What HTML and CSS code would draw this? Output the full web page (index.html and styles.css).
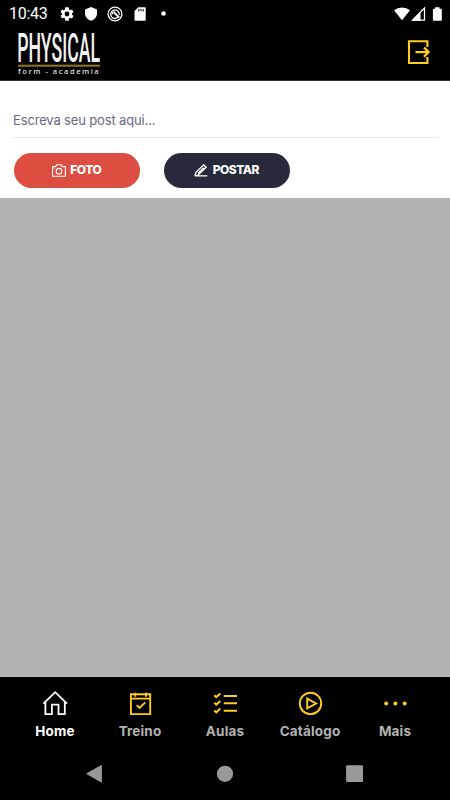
FILE: index.html
```html
<!DOCTYPE html>
<html lang="pt-BR">
<head>
  <meta charset="UTF-8">
  <meta name="viewport" content="width=device-width, initial-scale=1.0">
  <title>Physical Form Academia</title>
  <link rel="stylesheet" href="styles.css">
</head>
<body>
  <!-- barra de status -->
  <div class="status-bar">
    <span class="clock">10:43</span>
    <div class="status-icons">
      <svg width="16" height="16" viewBox="0 0 24 24"><path fill="#fff" fill-rule="evenodd" d="M19.4 13a7.500 7.500 0 0 0 0-2l2.400-1.800-2.300-4-2.800 1.100a7 7 0 0 0-1.700-1L14.600 2H9.400L9 5.300a7 7 0 0 0-1.700 1L4.500 5.200l-2.300 4L4.600 11a7.500 7.500 0 0 0 0 2l-2.400 1.800 2.300 4 2.800-1.100a7 7 0 0 0 1.700 1l.4 3.300h5.200l.4-3.300a7 7 0 0 0 1.700-1l2.800 1.100 2.300-4zM12 15.600a3.600 3.600 0 1 1 0-7.200 3.600 3.600 0 0 1 0 7.200z"/></svg>
      <svg width="16" height="16" viewBox="0 0 16 16"><path fill="#fff" d="M8 1l6 2.400v4.100c0 3.300-2.500 6.200-6 7.300-3.500-1.100-6-4-6-7.300V3.400z"/></svg>
      <svg width="16" height="16" viewBox="0 0 16 16" fill="none" stroke="#fff"><circle cx="8" cy="8" r="6.900" stroke-width="1.300"/><path d="M11.700 10.300a4.300 4.300 0 1 1 .5-1.500" stroke-width="1.300"/><path d="M7 6.800l5.200 4.600" stroke-width="1.900"/><path d="M5.300 8.400a1.900 1.900 0 0 1 3-2" stroke-width="1.300"/></svg>
      <svg width="16" height="16" viewBox="0 0 16 16"><path fill="#fff" d="M6.300 1.200h6.400c.6 0 1 .4 1 1v11.600c0 .6-.4 1-1 1H3.500c-.6 0-1-.4-1-1V5z"/><path stroke="#000" d="M6.800 3v2.400M9 3v2.400M11.200 3v2.400"/></svg>
      <svg width="16" height="16" viewBox="0 0 16 16"><circle cx="7.500" cy="7.500" r="2.300" fill="#fff"/></svg>
    </div>
    <svg class="signal" width="50" height="16" viewBox="0 0 50 16">
      <path fill="#fff" d="M0 4.300a12.500 12.500 0 0 1 16 0L8 14.300z"/>
      <path fill="none" stroke="#fff" stroke-width="1.200" d="M18.600 14.100L30.500 2v12.100z"/>
      <path fill="#fff" d="M17.500 14.700L26.500 5.500v9.200z"/>
      <path fill="#fff" d="M41 1.200h4.500v1.500h1.600c.4 0 .7.300.7.700v10.500c0 .4-.3.800-.8.800h-7.300c-.5 0-.8-.4-.8-.8V3.400c0-.4.300-.7.700-.7H41z"/>
    </svg>
  </div>

  <!-- topo com logo e sair -->
  <header class="header">
    <svg class="logo" width="90" height="50" viewBox="0 0 90 50">
      <text class="logo-name" transform="translate(1.200 33.300) scale(.46 1)" textLength="180" lengthAdjust="spacingAndGlyphs">PHYSICAL</text>
      <rect x="2" y="35.700" width="82" height="2" fill="#967714"/>
      <text class="logo-sub" x="2" y="45">form - academia</text>
    </svg>
    <svg width="24" height="26" viewBox="0 0 24 26" fill="none" stroke="#fc2">
      <path d="M20.400 8V2.200H2V24h18.400v-6" stroke-width="2.100"/>
      <path d="M8.500 13.100h13M17 8.500l4.600 4.600-4.600 4.600" stroke-width="2.300"/>
    </svg>
  </header>

  <!-- novo post -->
  <section class="composer">
    <textarea class="post-input" placeholder="Escreva seu post aqui..."></textarea>
    <div class="actions">
      <button type="button" class="btn btn-photo">
        <svg width="14" height="13" viewBox="0 0 14 13" fill="none" stroke="#fff" stroke-width="1.100"><path d="M.6 2.600h3L4.700.8h4.600l1.100 1.800h3v9.600H.6z"/><circle cx="7" cy="7.200" r="2.800"/><path d="M1.900 4.300h1"/></svg>
        <span>FOTO</span>
      </button>
      <button type="button" class="btn btn-post">
        <svg width="14" height="13" viewBox="0 0 14 13" fill="none" stroke="#fff" stroke-width="1.300"><path d="M1 11.900l.9-3.600L9.700.9l2.500 2.300-7.800 7.600-3.400 1.100h12.300M4 9.200l5.700-5.500"/></svg>
        <span>POSTAR</span>
      </button>
    </div>
  </section>

  <main class="feed"></main>

  <!-- menu inferior -->
  <nav class="tabs">
    <a class="tab active">
      <svg width="26" height="26" viewBox="0 0 26 26" fill="none" stroke="#fff" stroke-width="1.800"><path d="M1.400 13.700L13.200 2.200 25 13.700M3.400 12v12.200h6.500v-9.500h6.600v9.500h6.300V12"/></svg>
      <span>Home</span>
    </a>
    <a class="tab">
      <svg width="26" height="26" viewBox="0 0 26 26" fill="none" stroke="#fc2" stroke-width="1.900"><path d="M3.900 4.200h19.300v19.900H3.900zM3.900 8.600h19.300M8.200 2.800v4M19 2.800v4M9.700 15.100l2.900 2.900 5.700-5.700"/></svg>
      <span>Treino</span>
    </a>
    <a class="tab">
      <svg width="26" height="26" viewBox="0 0 26 26" fill="none" stroke="#fc2" stroke-width="2"><path d="M2.300 5.300l2 1.800 4-3.700M2.300 12.800l2 1.800 4-3.700M2.300 20.500l2 1.800 4-3.700M11.700 5.900H25M11.700 13.200H25M11.700 20.700H25"/></svg>
      <span>Aulas</span>
    </a>
    <a class="tab">
      <svg width="26" height="26" viewBox="0 0 26 26" fill="none" stroke="#fc2" stroke-width="1.900"><circle cx="13.500" cy="13.400" r="10.700"/><path d="M10.200 8.600v9.800l8.900-4.900z"/></svg>
      <span>Catálogo</span>
    </a>
    <a class="tab">
      <svg width="26" height="26" viewBox="0 0 26 26" fill="#fc2"><circle cx="4.200" cy="13.400" r="2"/><circle cx="13.400" cy="13.400" r="2"/><circle cx="22.700" cy="13.400" r="2"/></svg>
      <span>Mais</span>
    </a>
  </nav>

  <!-- botões do sistema -->
  <div class="system-nav">
    <svg width="18" height="20" viewBox="0 0 18 20"><path d="M.8 9.700L15.400 1.500v16.600z" fill="#999" stroke="#999" stroke-linejoin="round"/></svg>
    <svg width="18" height="20" viewBox="0 0 18 20"><circle cx="9" cy="9.800" r="8.100" fill="#999"/></svg>
    <svg width="18" height="20" viewBox="0 0 18 20"><rect x=".1" y="1.200" width="16.900" height="16.900" rx="1.200" fill="#999"/></svg>
  </div>
</body>
</html>
```
FILE: styles.css
```css
* {
  box-sizing: border-box;
}

body {
  display: flex;
  flex-direction: column;
  height: 100vh;
  margin: 0;
  overflow: hidden;
  background-color: #b2b2b2;
  font-family: Inter, Roboto, sans-serif;
}

svg {
  display: block;
  flex-shrink: 0;
}

/* barra de status */
.status-bar {
  display: flex;
  align-items: center;
  height: 27px;
  padding: 0 2px 0 9px;
  background-color: #000;
  color: #fff;
}

.clock {
  width: 50px;
  font-family: Roboto, sans-serif;
  font-size: 16px;
  line-height: 19px;
  letter-spacing: -0.3px;
}

.status-icons {
  display: flex;
  gap: 8.2px;
}

.signal {
  margin-left: auto;
  margin-right: 4px;
}

/* topo */
.header {
  display: flex;
  align-items: flex-start;
  justify-content: space-between;
  height: 54px;
  padding: 0 19px 0 16px;
  border-bottom: 1px solid #333;
  background-color: #000;
}

.header svg:last-child {
  margin-top: 12px;
}

.logo {
  margin-top: 2px;
  overflow: visible;
}

.logo-name {
  font-family: Roboto, sans-serif;
  font-size: 41px;
  font-weight: 500;
  fill: #f2f2f2;
}

.logo-sub {
  font-family: "Open Sans", sans-serif;
  font-size: 7.5px;
  font-weight: 600;
  letter-spacing: 1.55px;
  fill: #ddd;
}

/* novo post */
.composer {
  height: 117px;
  padding: 29px 11px 0 13px;
  background-color: #fff;
}

.post-input {
  display: block;
  width: 100%;
  height: 28px;
  padding: 0;
  border: 0;
  border-bottom: 1px solid #e4e4ec;
  outline: none;
  resize: none;
  overflow: hidden;
  font-family: Inter, sans-serif;
  font-size: 13px;
  line-height: 20px;
  letter-spacing: -0.15px;
}

.post-input::placeholder {
  color: #686884;
}

.actions {
  display: flex;
  gap: 24px;
  margin-top: 14.5px;
  margin-left: 0.5px;
}

.btn {
  display: flex;
  align-items: center;
  justify-content: center;
  gap: 4.5px;
  width: 126px;
  height: 35px;
  padding: 0 0 1px;
  border: 0;
  border-radius: 18px;
  color: #fff;
  font-family: Inter, sans-serif;
  font-size: 12px;
  font-weight: 800;
  letter-spacing: -0.5px;
}

.btn svg {
  margin-top: 1px;
}

.btn span {
  margin-top: -1px;
}

.btn-photo {
  background-color: #dc4e41;
}

.btn-post {
  background-color: #282a3c;
}

.feed {
  flex: 1;
}

/* menu inferior */
.tabs {
  display: flex;
  height: 70px;
  padding: 13px 12.5px 0;
  background-color: #000;
}

.tab {
  display: flex;
  flex: 1;
  flex-direction: column;
  align-items: center;
  gap: 6px;
  color: #b2b2b2;
  font-size: 13.5px;
  font-weight: 700;
  line-height: 18px;
  letter-spacing: 0.15px;
}

.tab.active {
  color: #fff;
}

/* botões do sistema */
.system-nav {
  display: flex;
  justify-content: center;
  gap: 112px;
  height: 53px;
  padding-top: 17px;
  background-color: #000;
}
```
